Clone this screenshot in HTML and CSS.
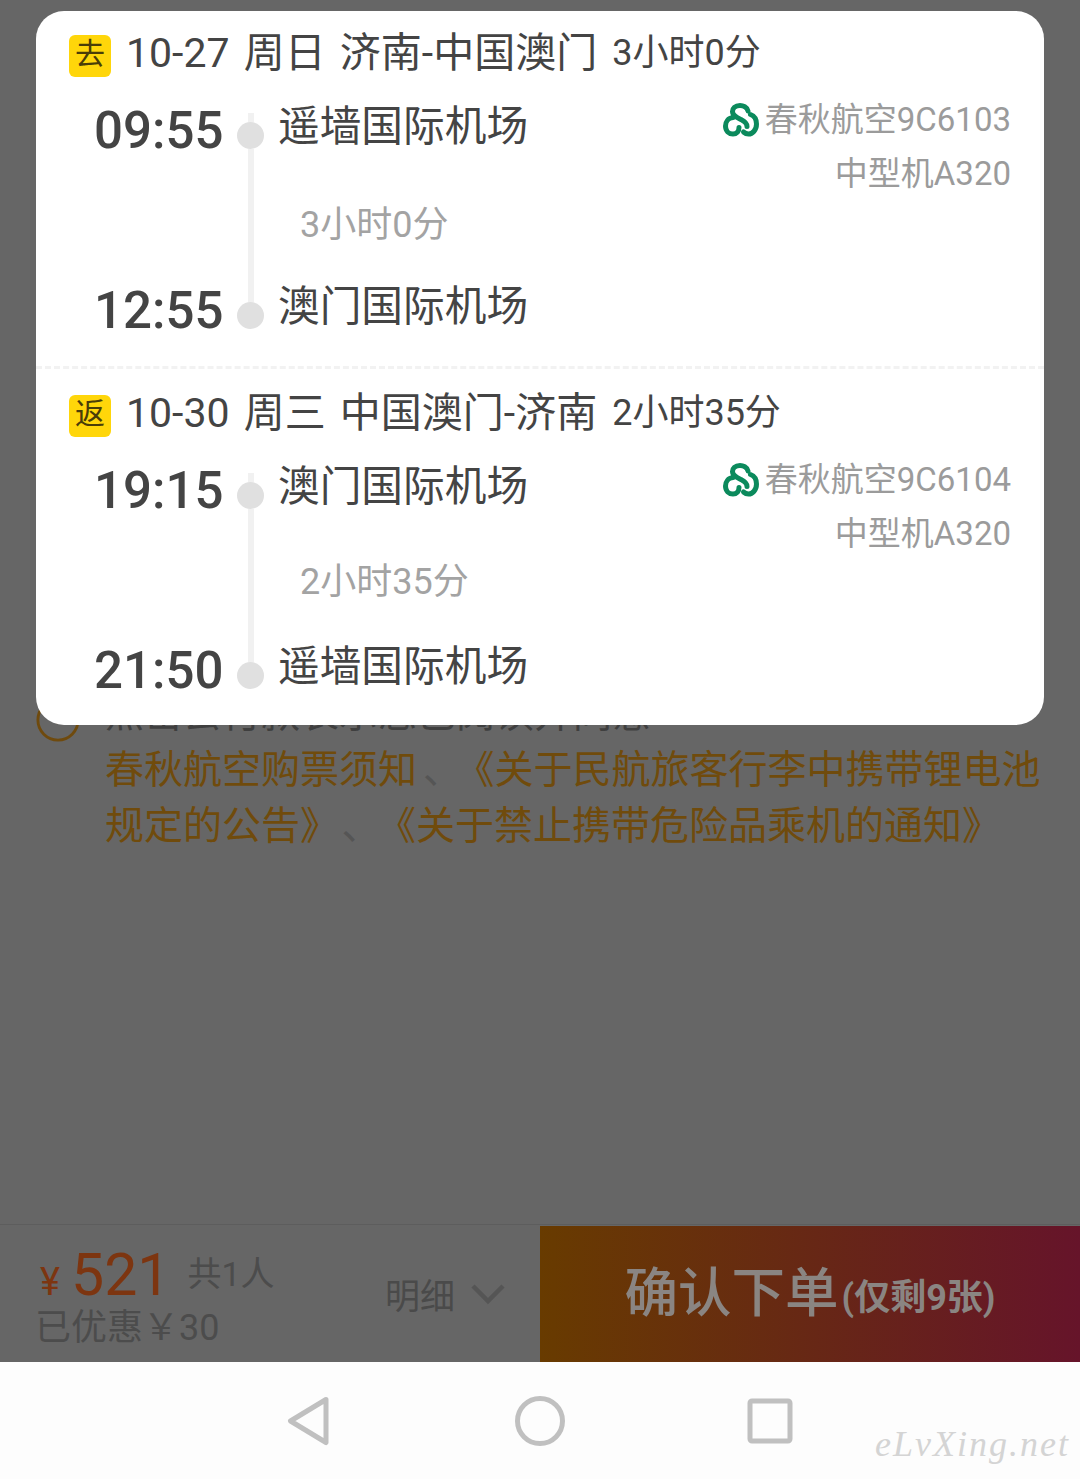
FILE: index.html
```html
<!DOCTYPE html>
<html lang="zh">
<head>
<meta charset="utf-8">
<title>确认下单</title>
<link rel="stylesheet" href="styles.css">
</head>
<body>
<div class="page">
  <main class="content">
    <div class="terms">
      <svg class="info" viewBox="0 0 46 46"><circle cx="23" cy="23" r="21" fill="none" stroke="#6f4a0d" stroke-width="3"/><path d="M23 12v15" stroke="#6f4a0d" stroke-width="3"/></svg>
      <div class="terms-text">
        <p class="terms-lead">点击去付款表示您已阅读并同意</p>
        <p>春秋航空购票须知<span class="sep">、</span><span class="punct">《</span>关于民航旅客行李中携带锂电池</p>
        <p>规定的公告<span class="punct">》</span><span class="sep sep-wide">、</span><span class="punct">《</span>关于禁止携带危险品乘机的通知<span class="punct">》</span></p>
      </div>
    </div>
  </main>
  <footer class="bar">
    <div class="summary">
      <div class="price-box">
        <div class="price-line"><span class="yen">¥</span><span class="amount">521</span><span class="people">共1人</span></div>
        <div class="saved">已优惠￥30</div>
      </div>
      <div class="detail">明细<svg class="chevron" viewBox="0 0 34 22"><path d="M2 3l15 15L32 3" fill="none" stroke="#555" stroke-width="4.5"/></svg></div>
    </div>
    <div class="confirm"><span class="confirm-main">确认下单</span><span class="confirm-sub">(仅剩9张)</span></div>
  </footer>
  <nav class="nav">
    <svg class="nav-back" viewBox="0 0 44 50"><path d="M39 3.500L3.500 25 39 46.500z" fill="none" stroke="#c0c0c0" stroke-width="5" stroke-linejoin="round"/></svg>
    <svg class="nav-home" viewBox="0 0 50 50"><circle cx="25" cy="25" r="22.500" fill="none" stroke="#c0c0c0" stroke-width="5"/></svg>
    <svg class="nav-recent" viewBox="0 0 46 46"><rect x="3" y="3" width="40" height="40" rx="2" fill="none" stroke="#c0c0c0" stroke-width="5"/></svg>
    <span class="mark">eLvXing.net</span>
  </nav>

  <section class="card">
    <article class="segment">
      <header class="seg-head"><span class="tag">去</span><span class="seg-title">10-27 周日 济南-中国澳门</span><span class="seg-time">3小时0分</span></header>
      <div class="seg-body">
        <div class="times"><div class="time">09:55</div><div class="time">12:55</div></div>
        <div class="rail"><i class="rail-tip"></i><i class="dot"></i><i class="rail-line"></i><i class="dot"></i></div>
        <div class="stops">
          <div class="stop">遥墙国际机场</div>
          <div class="dur">3小时0分</div>
          <div class="stop">澳门国际机场</div>
        </div>
        <div class="flight">
          <div class="flight-line"><svg class="logo" viewBox="0 0 36 34"><path d="M25 8C24 4 20 2.500 17 2.500C12 2.500 9.500 5.500 9.500 8.500C9.500 12.500 14 14.500 18 16.500C21.500 18.200 24 20 24 23.500M10 14.500C5 15 2.500 19 2.500 23C2.500 28 6 31 10 31C14 31 16 28 16 24.500M27.500 11.500C31.500 13 33.500 17 33.500 21C33.500 27 29.500 31 25.500 31C23.500 31 22 30.300 20.500 29" fill="none" stroke="#0b8a5c" stroke-width="5" stroke-linecap="round"/></svg>春秋航空9C6103</div>
          <div class="flight-line">中型机A320</div>
        </div>
      </div>
    </article>
    <article class="segment segment-return">
      <header class="seg-head"><span class="tag">返</span><span class="seg-title">10-30 周三 中国澳门-济南</span><span class="seg-time">2小时35分</span></header>
      <div class="seg-body">
        <div class="times"><div class="time">19:15</div><div class="time">21:50</div></div>
        <div class="rail"><i class="rail-tip"></i><i class="dot"></i><i class="rail-line"></i><i class="dot"></i></div>
        <div class="stops">
          <div class="stop">澳门国际机场</div>
          <div class="dur">2小时35分</div>
          <div class="stop">遥墙国际机场</div>
        </div>
        <div class="flight">
          <div class="flight-line"><svg class="logo" viewBox="0 0 36 34"><path d="M25 8C24 4 20 2.500 17 2.500C12 2.500 9.500 5.500 9.500 8.500C9.500 12.500 14 14.500 18 16.500C21.500 18.200 24 20 24 23.500M10 14.500C5 15 2.500 19 2.500 23C2.500 28 6 31 10 31C14 31 16 28 16 24.500M27.500 11.500C31.500 13 33.500 17 33.500 21C33.500 27 29.500 31 25.500 31C23.500 31 22 30.300 20.500 29" fill="none" stroke="#0b8a5c" stroke-width="5" stroke-linecap="round"/></svg>春秋航空9C6104</div>
          <div class="flight-line">中型机A320</div>
        </div>
      </div>
    </article>
  </section>
</div>
</body>
</html>
```
FILE: styles.css
```css
* { box-sizing: border-box; }
html, body { margin: 0; padding: 0; }
body { font-family: Roboto, "Noto Sans CJK SC", sans-serif; background: #666; }
p { margin: 0; }
.page { position: relative; width: 1080px; height: 1479px; display: flex; flex-direction: column; overflow: hidden; background: #666; }

/* dimmed page behind the sheet */
.content { flex: 1; padding: 686px 36px 0; }
.terms { display: flex; gap: 25px; }
.info { width: 44px; height: 44px; margin-top: 12px; flex: none; }
.terms-text { font-size: 39px; line-height: 56px; color: #704b0c; white-space: nowrap; }
.terms-lead { color: #3f3f3f; }
.sep { color: #555; margin-left: 6px; margin-right: 13px; }
.sep-wide { margin-left: 22px; margin-right: 16px; }
.punct { font-family: Roboto, "Noto Sans CJK TC", sans-serif; }

.bar { height: 138px; display: flex; flex: none; border-top: 1px solid #5d5d5d; }
.summary { width: 540px; display: flex; justify-content: space-between; padding: 0 36px; }
.price-box { display: flex; flex-direction: column; }
.price-line { display: flex; align-items: baseline; height: 78px; padding-top: 21px; }
.yen { font-size: 38px; color: #7d3510; margin-left: 4px; width: 31px; }
.amount { font-size: 59px; line-height: 58px; color: #7d3510; }
.people { font-size: 34px; color: #4c4c4c; margin-left: 17px; position: relative; top: -9px; }
.saved { font-size: 36px; line-height: 42px; color: #4c4c4c; margin-left: -1px; padding-top: 4px; }
.detail { display: flex; align-items: center; gap: 16px; font-size: 35px; color: #4a4a4a; }
.chevron { width: 34px; height: 22px; margin-right: -1px; }
.confirm { flex: 1; margin-top: 1px; padding-bottom: 11px; display: flex; align-items: center; justify-content: center; gap: 3px; background: linear-gradient(90deg, #683b00, #66142a); color: #8a8582; }
.confirm-main { font-size: 53.500px; font-weight: 500; }
.confirm-sub { font-size: 36px; font-weight: 700; padding-top: 10px; }

.nav { position: relative; height: 117px; flex: none; background: #fdfdfd; display: flex; align-items: center; justify-content: center; }
.nav-back { position: absolute; left: 287px; top: 34px; width: 44px; height: 50px; }
.nav-home { position: absolute; left: 515px; top: 34px; width: 50px; height: 50px; }
.nav-recent { position: absolute; left: 747px; top: 36px; width: 46px; height: 46px; }
.mark { position: absolute; left: 875px; top: 61px; font-family: "Liberation Serif", serif; font-style: italic; font-size: 36px; color: #d4d4d4; letter-spacing: 2px; }

/* flight sheet */
.card { position: absolute; left: 36px; top: 11px; width: 1008px; height: 714px; background: #fff; border-radius: 28px; overflow: hidden; }
.segment { height: 355px; padding: 23px 33px 0; }
.segment-return { height: 359px; border-top: 3px dashed #f2f2f2; padding-top: 25px; }
.seg-head { display: flex; align-items: center; height: 44px; color: #444; }
.tag { width: 42px; height: 42px; margin-right: 16px; border-radius: 6px; background: #ffd60a; color: #4a3d08; font-size: 30px; line-height: 38px; text-align: center; flex: none; }
.seg-title { font-size: 41px; white-space: nowrap; word-spacing: 4px; padding-bottom: 14px; margin-left: -1px; }
.seg-time { font-size: 36px; margin-left: 15px; white-space: nowrap; padding-bottom: 14px; }

.seg-body { display: flex; padding-top: 12px; padding-left: 25px; height: 280px; }
.times { width: 128px; display: flex; flex-direction: column; gap: 120px; padding-top: 11px; }
.time { font-size: 51px; line-height: 60px; font-weight: 500; color: #444; }
.rail { width: 27px; margin-left: 15px; display: flex; flex-direction: column; align-items: center; height: 239px; padding-top: 23px; }
.rail-tip { width: 6px; height: 9px; background: #f1f1f1; flex: none; }
.rail-line { width: 6px; flex: 1; background: #f1f1f1; }
.dot { width: 27px; height: 27px; border-radius: 50%; background: #e0e0e0; flex: none; }
.stops { width: 340px; margin-left: 14px; margin-top: 7px; display: flex; flex-direction: column; }
.stop { font-size: 41.700px; line-height: 60px; color: #444; white-space: nowrap; }
.dur { font-size: 36px; line-height: 60px; color: #a3a3a3; margin: 38px 0 22px; padding-left: 22px; }
.segment-return .dur { margin: 35px 0 25px; }
.flight { flex: 1; margin-top: 3px; text-align: right; font-size: 33px; line-height: 54px; color: #9b9b9b; white-space: nowrap; }
.flight-line { display: flex; justify-content: flex-end; align-items: center; }
.logo { width: 36px; height: 34px; margin-right: 6px; flex: none; }
```
